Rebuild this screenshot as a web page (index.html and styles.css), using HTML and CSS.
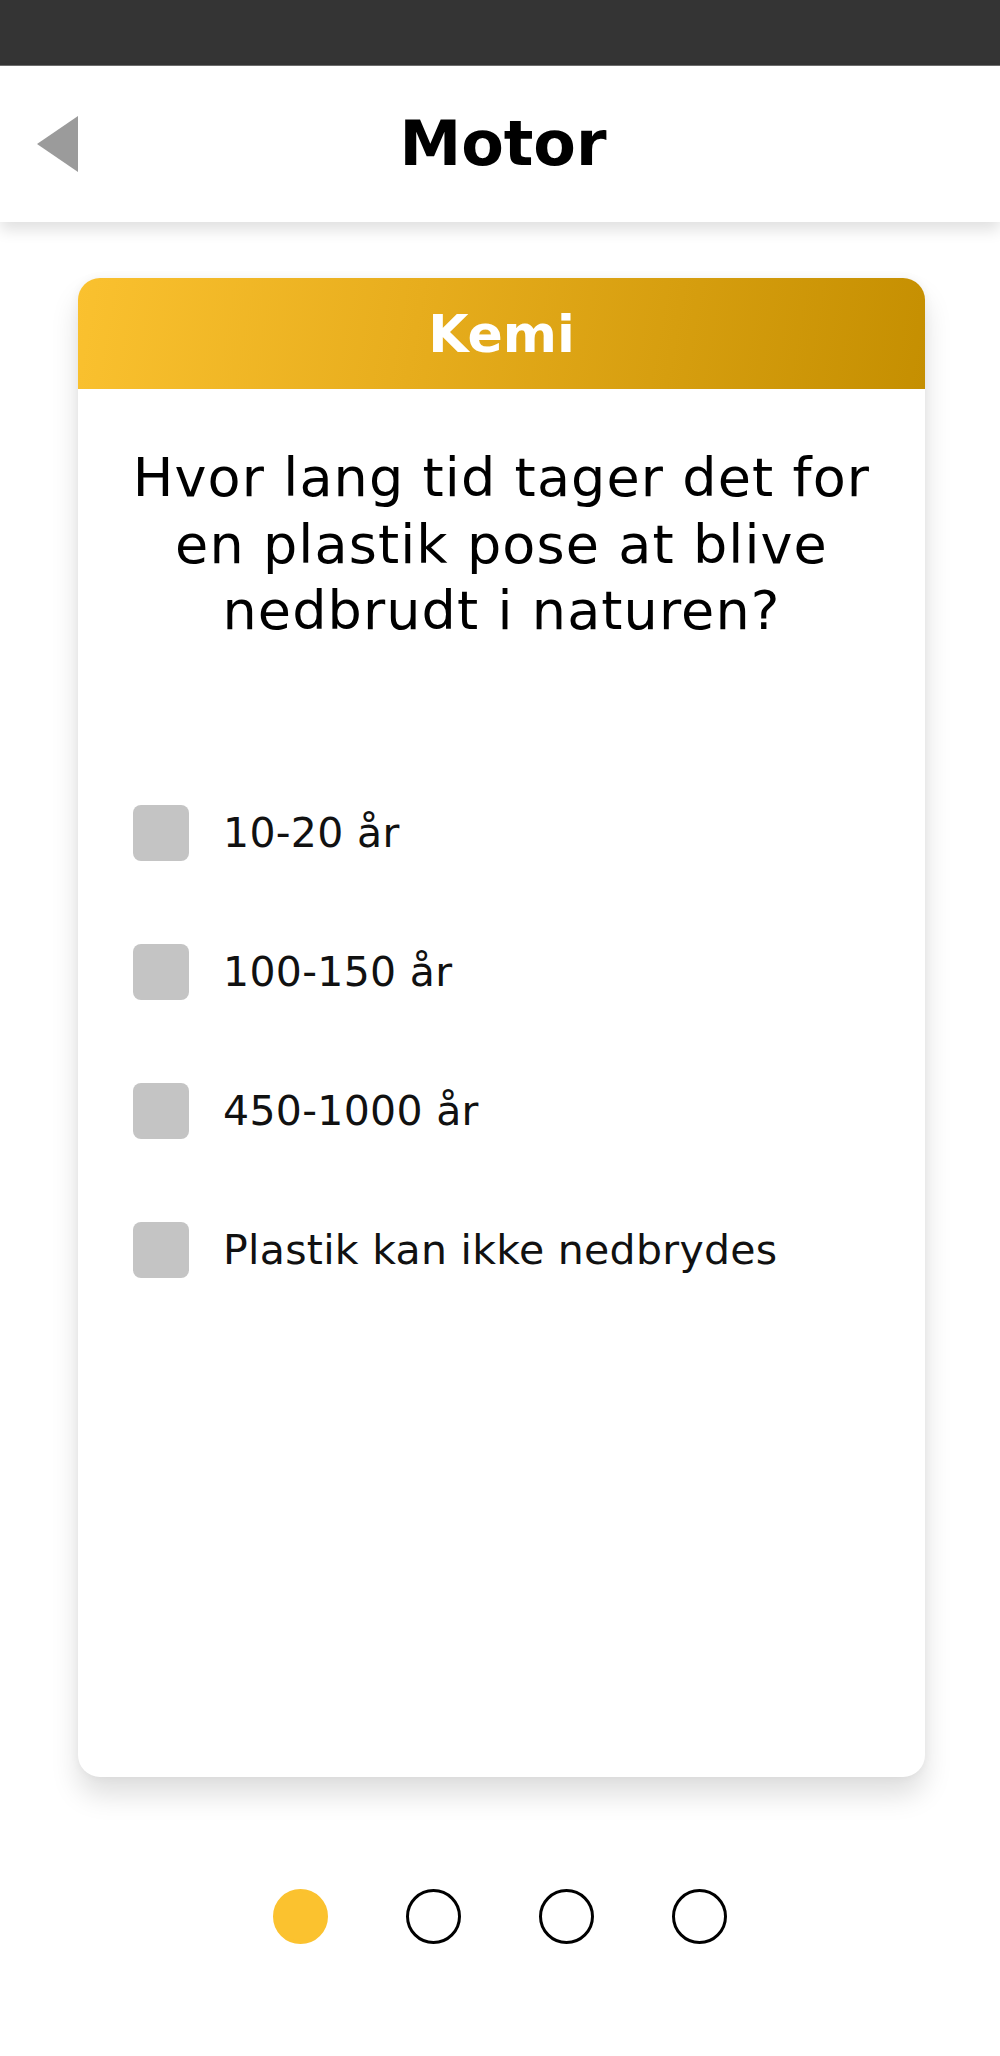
FILE: index.html
```html
<!DOCTYPE html>
<html lang="da">
<head>
<meta charset="utf-8">
<title>Motor</title>
<link rel="stylesheet" href="styles.css">
</head>
<body>
  <div class="status"></div>
  <header class="topbar">
    <div class="back">
      <svg class="back-icon" width="42" height="56" viewBox="0 0 42 56"><polygon points="41,0 41,56 0,28" fill="#9b9b9b"/></svg>
    </div>
    <h1 class="title">Motor</h1>
    <div></div>
  </header>
  <main class="main">
    <section class="card">
      <div class="card-head">Kemi</div>
      <div class="card-body">
        <p class="question">Hvor lang tid tager det for<br>en plastik pose at blive<br>nedbrudt i naturen?</p>
        <ul class="options">
          <li class="option"><span class="box"></span><span class="label">10-20 år</span></li>
          <li class="option"><span class="box"></span><span class="label">100-150 år</span></li>
          <li class="option"><span class="box"></span><span class="label">450-1000 år</span></li>
          <li class="option"><span class="box"></span><span class="label">Plastik kan ikke nedbrydes</span></li>
        </ul>
      </div>
    </section>
    <nav class="dots">
      <span class="dot active"></span>
      <span class="dot"></span>
      <span class="dot"></span>
      <span class="dot"></span>
    </nav>
  </main>
</body>
</html>
```
FILE: styles.css
```css
html, body {
  margin: 0;
  padding: 0;
  background: #ffffff;
}
body {
  width: 1000px;
  font-family: "DejaVu Sans", "Noto Sans", sans-serif;
  color: #000;
}
.status {
  height: 65px;
  background: #343434;
  border-bottom: 1px solid #6e6e6e;
}
.topbar {
  height: 156px;
  display: grid;
  grid-template-columns: 1fr auto 1fr;
  align-items: center;
  background: #fff;
  box-shadow: 0 8px 14px rgba(0, 0, 0, 0.12);
  position: relative;
  z-index: 1;
}
.back {
  padding-left: 37px;
  display: flex;
  align-items: center;
}
.back-icon {
  display: block;
}
.title {
  margin: 0;
  font-size: 62px;
  font-weight: 700;
  line-height: 1;
  padding-left: 6px;
}
.main {
  padding-top: 56px;
}
.card {
  width: 847px;
  height: 1499px;
  margin: 0 0 0 78px;
  border-radius: 22px;
  background: #fff;
  overflow: hidden;
  box-shadow: 0 18px 28px rgba(0, 0, 0, 0.13), 0 0 10px rgba(0, 0, 0, 0.05);
}
.card-head {
  height: 111px;
  display: flex;
  align-items: center;
  justify-content: center;
  background: linear-gradient(100deg, #fac12f 0%, #e7ad1d 40%, #c58f01 100%);
  color: #fff;
  font-size: 52px;
  font-weight: 700;
}
.card-body {
  padding: 56px 55px 0;
}
.question {
  margin: 0 -30px;
  text-align: center;
  font-size: 54px;
  line-height: 66.5px;
  letter-spacing: 1.1px;
}
.options {
  list-style: none;
  margin: 160px 0 0;
  padding: 0;
  display: flex;
  flex-direction: column;
  gap: 83px;
}
.option {
  display: flex;
  align-items: center;
  gap: 34px;
  height: 56px;
}
.box {
  width: 56px;
  height: 56px;
  border-radius: 8px;
  background: #c4c4c4;
  flex: none;
}
.label {
  font-size: 41px;
  color: #111;
  letter-spacing: 0.3px;
}
.dots {
  display: flex;
  justify-content: center;
  gap: 78px;
  margin-top: 112px;
}
.dot {
  width: 55px;
  height: 55px;
  border-radius: 50%;
  border: 3px solid #000;
  box-sizing: border-box;
}
.dot.active {
  background: #fbc22f;
  border-color: #fbc22f;
}
```
